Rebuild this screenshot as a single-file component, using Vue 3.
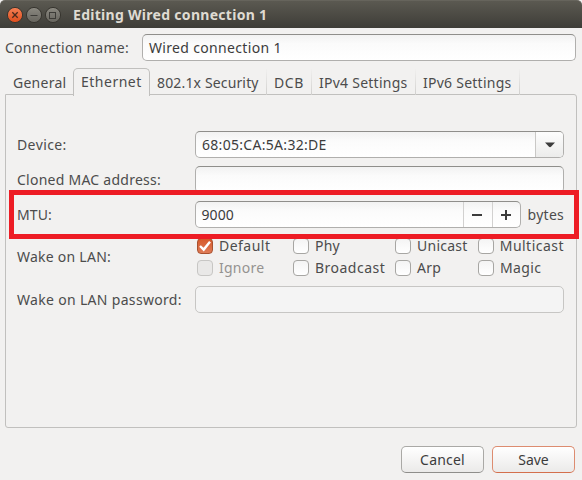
<script setup>
import { ref } from 'vue'

const name = ref('Wired connection 1')
const tabs = [
  { id: 'general', label: 'General' },
  { id: 'ethernet', label: 'Ethernet', active: true },
  { id: 'security', label: '802.1x Security' },
  { id: 'dcb', label: 'DCB' },
  { id: 'ipv4', label: 'IPv4 Settings' },
  { id: 'ipv6', label: 'IPv6 Settings' },
]
const wakeOptions = [
  { label: 'Default', checked: true },
  { label: 'Phy' },
  { label: 'Unicast' },
  { label: 'Multicast' },
  { label: 'Ignore', disabled: true },
  { label: 'Broadcast' },
  { label: 'Arp' },
  { label: 'Magic' },
]
</script>

<template>
  <div class="window">
    <header class="titlebar">
      <svg class="controls" width="56" height="18" viewBox="0 0 56 18">
        <defs>
          <linearGradient id="close" x1="0" y1="0" x2="0" y2="1">
            <stop offset="0" stop-color="#f58156" />
            <stop offset="1" stop-color="#de4c1b" />
          </linearGradient>
          <linearGradient id="grey" x1="0" y1="0" x2="0" y2="1">
            <stop offset="0" stop-color="#8b8981" />
            <stop offset="1" stop-color="#66645d" />
          </linearGradient>
        </defs>
        <circle cx="9" cy="9" r="7.6" fill="url(#close)" stroke="#37352f" />
        <circle cx="28" cy="9" r="7.6" fill="url(#grey)" stroke="#37352f" />
        <circle cx="47" cy="9" r="7.6" fill="url(#grey)" stroke="#37352f" />
        <path d="M6.3 6.3l5.4 5.4M11.7 6.3l-5.4 5.4" stroke="#4a2a1d" stroke-width="1.3" />
        <path d="M24.5 9.5h7" stroke="#3c3b37" />
        <rect x="43.5" y="6.5" width="6" height="6" fill="none" stroke="#3c3b37" />
      </svg>
      <h1>Editing Wired connection 1</h1>
    </header>

    <div class="name-row">
      <span class="name-label">Connection name:</span>
      <div class="entry name-entry">{{ name }}</div>
    </div>

    <nav class="tabs">
      <div v-for="t in tabs" :key="t.id" class="tab" :class="[t.id, { active: t.active }]">
        <span>{{ t.label }}</span>
      </div>
    </nav>

    <main class="panel">
      <div class="row">
        <span class="label device">Device:</span>
        <div class="entry combo">
          <span class="value mac">68:05:CA:5A:32:DE</span>
          <span class="drop">
            <svg width="10" height="6" viewBox="0 0 10 6"><path d="M0 .5h10L6 4.8Q5 5.5 4 4.8z" fill="#3c3c3c" /></svg>
          </span>
        </div>
      </div>
      <div class="row">
        <span class="label cloned">Cloned MAC address:</span>
        <div class="entry"></div>
      </div>
      <div class="row mtu-row">
        <span class="label mtu">MTU:</span>
        <div class="entry spin">
          <span class="value num">9000</span>
          <span class="step"><svg width="12" height="12"><path d="M1 6h10" stroke="#3c3c3c" stroke-width="2" /></svg></span>
          <span class="step plus"><svg width="12" height="12"><path d="M1 6h10M6 1v10" stroke="#3c3c3c" stroke-width="2" /></svg></span>
        </div>
        <span class="bytes">bytes</span>
        <div class="highlight"></div>
      </div>
      <div class="row wake-row">
        <span class="label wol">Wake on LAN:</span>
        <div class="checks">
          <div
            v-for="o in wakeOptions"
            :key="o.label"
            class="check"
            :class="[o.label.toLowerCase(), { checked: o.checked, disabled: o.disabled }]"
          >
            <i class="box">
              <svg v-if="o.checked" width="14" height="14" viewBox="0 0 14 14">
                <path d="M2 7l3.7 3.6L12 2.8" fill="none" stroke="#fff" stroke-width="2.4" />
              </svg>
            </i>
            <span>{{ o.label }}</span>
          </div>
        </div>
      </div>
      <div class="row">
        <span class="label password">Wake on LAN password:</span>
        <div class="entry insensitive"></div>
      </div>
    </main>

    <footer class="actions">
      <button class="cancel">Cancel</button>
      <button class="save">Save</button>
    </footer>
  </div>
</template>

<style>
body {
  margin: 0;
  background: #f2f1f0;
}
</style>

<style scoped>
.window {
  width: 582px;
  height: 480px;
  box-sizing: border-box;
  overflow: hidden;
  background: #f2f1f0;
  color: #4c4c4c;
  font: 14px/20px "Noto Sans", "Open Sans", sans-serif;
  letter-spacing: 0.25px;
  white-space: nowrap;
}
.window * { box-sizing: border-box; }
.titlebar {
  height: 28px;
  display: flex;
  align-items: center;
  padding: 1px 6px 0;
  background: linear-gradient(#5b5951, #3e3d38);
  border-top: 1px solid #66645c;
  border-radius: 5px 5px 0 0;
}
h1 {
  margin: 0 0 0 11px;
  color: #dfdbd2;
  font-size: 14px;
  font-weight: 700;
  letter-spacing: 0.29px;
}
.name-row {
  display: flex;
  align-items: center;
  padding: 6px 6px 0 5px;
}
.name-label { width: 137px; }
.entry {
  height: 27px;
  flex: 1;
  display: flex;
  align-items: center;
  padding-left: 6px;
  color: #3c3c3c;
  border: 1px solid #b0afad;
  border-top-color: #8f8e8b;
  border-radius: 5px;
  background: linear-gradient(#f2f2f2, #fbfbfb 35%, #fff);
}
.name-entry { letter-spacing: 0.33px; }
.tabs {
  height: 27px;
  margin: 7px 0 0 5px;
  display: flex;
  align-items: flex-end;
}
.tab {
  position: relative;
  height: 26px;
  padding: 4px 0 0 7px;
  border-right: 1px solid;
  border-image: linear-gradient(#f2f1f0, #cfcecc) 1;
}
.general { width: 68px; border-right: 0; padding-left: 8px; }
.ethernet { width: 77px; letter-spacing: 0.5px; }
.security { width: 117px; letter-spacing: 0.15px; }
.dcb { width: 45px; letter-spacing: 0.6px; }
.ipv4, .ipv6 { width: 104px; }
.tab.active {
  height: 28px;
  margin-bottom: -1px;
  z-index: 1;
  padding: 3px 0 0 7px;
  border: 1px solid #c1c0be;
  border-bottom: 0;
  border-image: none;
  border-radius: 5px 5px 0 0;
  background: #f2f1f0;
}
.panel {
  height: 334px;
  margin: -1px 5px 0;
  padding: 36px 12px 0 11px;
  border: 1px solid #c1c0be;
  border-radius: 0 3px 3px 3px;
}
.row {
  display: flex;
  align-items: center;
  height: 27px;
  margin-bottom: 8px;
}
.label { width: 178px; }
.device { letter-spacing: 0.4px; }
.mtu { letter-spacing: 0.1px; }
.password { letter-spacing: 0.32px; }
.combo, .spin { align-items: stretch; }
.value { flex: 1; line-height: 25px; }
.mac { letter-spacing: 0.3px; }
.num { letter-spacing: 0; }
.drop {
  width: 28px;
  display: flex;
  align-items: center;
  justify-content: center;
  border-left: 1px solid #c9c8c6;
  border-radius: 0 4px 4px 0;
  background: linear-gradient(#fdfdfd, #ececeb);
}
.mtu-row { position: relative; }
.spin { flex: 0 0 326px; }
.step {
  width: 29px;
  display: flex;
  align-items: center;
  justify-content: center;
  border-left: 1px solid #d2d1d0;
}
.step svg { margin-right: 1px; }
.step.plus { width: 28px; }
.bytes { margin-left: 7px; }
.highlight {
  position: absolute;
  left: -8px;
  top: -11px;
  width: 570px;
  height: 49px;
  border: 5px solid #ed1c24;
  z-index: 2;
}
.wake-row { height: 42px; margin: 0 0 8px; }
.checks {
  display: grid;
  grid-template-columns: 96px 102px 83px 86px;
  grid-template-rows: 22px 22px;
  margin-left: 2px;
}
.check { display: flex; align-items: center; gap: 6px; }
.default, .multicast, .broadcast { letter-spacing: 0.48px; }
.magic { letter-spacing: 0.4px; }
.box {
  width: 16px;
  height: 16px;
  border: 1px solid #a7a6a3;
  border-radius: 4px;
  background: linear-gradient(#f4f4f4, #fff);
}
.box svg { display: block; }
.checked .box { border-color: #a9512f; background: linear-gradient(#d6592a, #df7c57); }
.disabled { color: #959390; }
.disabled .box { border-color: #c7c6c4; background: #e9e8e7; }
.insensitive { border-color: #c7c6c4; background: #f4f4f4; }
.actions {
  display: flex;
  justify-content: flex-end;
  gap: 8px;
  padding: 18px 7px 0;
}
button {
  width: 83px;
  height: 27px;
  padding: 0;
  font: inherit;
  letter-spacing: 0.2px;
  color: #3c3c3c;
  border: 1px solid #aaa9a6;
  border-bottom-color: #8f8e8b;
  border-radius: 5px;
  background: linear-gradient(#fff, #ebeae9);
}
.save { letter-spacing: 0; border-color: #dd8c70; border-bottom-color: #d46f4c; }
</style>
